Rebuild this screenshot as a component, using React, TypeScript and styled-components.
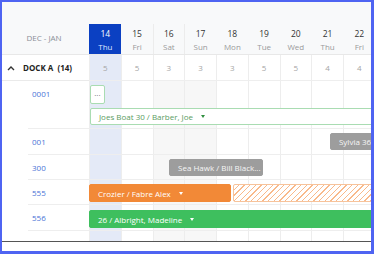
import React from 'react';
import styled, { createGlobalStyle } from 'styled-components';

const COL = 31.75;
const LABEL_W = 87;

type Kind = 'today' | 'weekend' | 'plain';

const days: { n: number; d: string; count: number; kind: Kind }[] = [
  { n: 14, d: 'Thu', count: 5, kind: 'today' },
  { n: 15, d: 'Fri', count: 5, kind: 'plain' },
  { n: 16, d: 'Sat', count: 3, kind: 'weekend' },
  { n: 17, d: 'Sun', count: 3, kind: 'weekend' },
  { n: 18, d: 'Mon', count: 3, kind: 'plain' },
  { n: 19, d: 'Tue', count: 5, kind: 'plain' },
  { n: 20, d: 'Wed', count: 5, kind: 'plain' },
  { n: 21, d: 'Thu', count: 4, kind: 'plain' },
  { n: 22, d: 'Fri', count: 4, kind: 'plain' },
];

type Variant = 'outline' | 'gray' | 'orange' | 'green' | 'hatch' | 'stub';

type Booking = {
  label?: string;
  start: number;
  end?: number; // days; undefined = runs past the view
  top: number;
  height: number;
  variant: Variant;
  caret?: boolean;
};

const rows: { id: string; height: number; bookings: Booking[] }[] = [
  {
    id: '0001',
    height: 48,
    bookings: [
      { label: '...', start: 0.03, end: 0.5, top: 4, height: 19, variant: 'stub' },
      { label: 'Joes Boat 30 / Barber, Joe', start: 0.03, top: 27, height: 17, variant: 'outline', caret: true },
    ],
  },
  {
    id: '001',
    height: 26,
    bookings: [{ label: 'Sylvia 36', start: 7.59, top: 4, height: 17, variant: 'gray' }],
  },
  {
    id: '300',
    height: 25,
    bookings: [{ label: 'Sea Hawk / Bill Black...', start: 2.52, end: 5.48, top: 4, height: 17, variant: 'gray' }],
  },
  {
    id: '555',
    height: 25,
    bookings: [
      { label: 'Crozier / Fabre Alex', start: 0, end: 4.47, top: 4, height: 18, variant: 'orange', caret: true },
      { start: 4.54, top: 4, height: 18, variant: 'hatch' },
    ],
  },
  {
    id: '556',
    height: 26,
    bookings: [{ label: '26 / Albright, Madeline', start: 0, top: 5, height: 18, variant: 'green', caret: true }],
  },
  { id: '558', height: 26, bookings: [] },
];

const GlobalStyle = createGlobalStyle`
  body {
    margin: 0;
    font-family: "Open Sans", "Liberation Sans", sans-serif;
    background: #fff;
  }
`;

const Frame = styled.div`
  width: 374px;
  height: 254px;
  box-sizing: border-box;
  border: solid #4f64f2;
  border-width: 2px 3px 3px 2px;
  background: #fff;
  overflow: hidden;
  display: flex;
  flex-direction: column;
`;

const Header = styled.div`
  display: flex;
  height: 53px;
  box-sizing: border-box;
  padding-top: 22px;
  background: #f8f9fa;
  border-bottom: 1px solid #e8e8e8;
  flex-shrink: 0;
`;

const RangeLabel = styled.div`
  width: ${LABEL_W}px;
  flex-shrink: 0;
  padding: 8px 3px 0 0;
  box-sizing: border-box;
  text-align: center;
  font-size: 8px;
  color: #8a8f98;
`;

const DayHead = styled.div<{ $kind: Kind }>`
  width: ${COL}px;
  flex-shrink: 0;
  display: flex;
  flex-direction: column;
  align-items: center;
  padding-top: 4px;
  box-sizing: border-box;
  background: ${(p) => (p.$kind === 'today' ? '#0b40c2' : 'transparent')};
  border-left: 1px solid ${(p) => (p.$kind === 'weekend' ? '#ececec' : 'transparent')};
`;

const DayNum = styled.span<{ $today: boolean }>`
  font-size: 8.5px;
  line-height: 12px;
  color: ${(p) => (p.$today ? '#fff' : '#333')};
`;

const DayName = styled.span<{ $today: boolean }>`
  font-size: 8px;
  line-height: 13px;
  color: ${(p) => (p.$today ? '#dfe6ff' : '#9a9a9a')};
`;

const Body = styled.div`
  height: 186px;
  overflow: hidden;
  flex-shrink: 0;
`;

const Row = styled.div<{ $h: number }>`
  display: flex;
  height: ${(p) => p.$h}px;
`;

const GroupLabel = styled.div`
  width: ${LABEL_W}px;
  flex-shrink: 0;
  display: flex;
  align-items: center;
  gap: 8px;
  padding-left: 5px;
  box-sizing: border-box;
  border-bottom: 1px solid #eaeaea;
  font-size: 8px;
  font-weight: 700;
  color: #222;
  white-space: pre;
`;

const ResourceLabel = styled.div`
  width: ${LABEL_W - 26}px;
  margin-left: 26px;
  flex-shrink: 0;
  padding-left: 4px;
  box-sizing: border-box;
  border-bottom: 1px solid #eeeeee;
  font-size: 8px;
  line-height: 26px;
  color: #4a73d6;
`;

const Track = styled.div`
  flex: 1;
  position: relative;
  display: grid;
  grid-template-columns: repeat(${days.length}, ${COL}px);
  border-bottom: 1px solid #eeeeee;
  overflow: hidden;
`;

const cellBg: Record<Kind, string> = {
  today: '#e4eaf7',
  weekend: '#f7f7f7',
  plain: '#fff',
};

const Cell = styled.div<{ $kind: Kind }>`
  background: ${(p) => cellBg[p.$kind]};
  border-left: 1px solid #ededed;
`;

const CountCell = styled(Cell)`
  display: flex;
  align-items: center;
  justify-content: center;
  font-size: 8px;
  color: #a5a5a5;
  background: ${(p) => (p.$kind === 'today' ? '#e4eaf7' : '#fff')};
`;

const barStyles: Record<Variant, string> = {
  outline: 'background:#fff;border:1px solid #a9dcb2;color:#5a9c62;',
  stub: 'background:#fff;border:1px solid #a9dcb2;color:#777;justify-content:center;padding:0 0 4px;',
  gray: 'background:#9d9d9d;border:1px solid #9d9d9d;color:#f6f6f6;',
  orange: 'background:#f28937;border:1px solid #f28937;color:#fff;',
  green: 'background:#3ebf5e;border:1px solid #3ebf5e;color:#fff;',
  hatch:
    'border:1px solid #f7c39b;background:repeating-linear-gradient(135deg,#fff 0 3px,#f9b98a 3px 4px);',
};

const Bar = styled.div<{ $variant: Variant }>`
  position: absolute;
  box-sizing: border-box;
  display: flex;
  align-items: center;
  gap: 8px;
  padding-left: 8px;
  border-radius: 2px;
  font-size: 8px;
  white-space: nowrap;
  overflow: hidden;
  ${(p) => barStyles[p.$variant]}
`;

const Caret = styled.span<{ $color: string }>`
  width: 0;
  height: 0;
  border-left: 2.5px solid transparent;
  border-right: 2.5px solid transparent;
  border-top: 3px solid ${(p) => p.$color};
`;

const Footer = styled.div`
  flex: 1;
  border-top: 1px solid #555;
  background: #fff;
`;

const ChevronUp = () => (
  <svg width="8" height="6" viewBox="0 0 8 6">
    <path d="M1 5 L4 2 L7 5" fill="none" stroke="#333" strokeWidth="1.4" />
  </svg>
);

const App: React.FC = () => {
  return (
    <>
      <GlobalStyle />
      <Frame>
        <Header>
          <RangeLabel>DEC - JAN</RangeLabel>
          {days.map((day) => (
            <DayHead key={day.n} $kind={day.kind}>
              <DayNum $today={day.kind === 'today'}>{day.n}</DayNum>
              <DayName $today={day.kind === 'today'}>{day.d}</DayName>
            </DayHead>
          ))}
        </Header>

        <Body>
          <Row $h={26}>
            <GroupLabel>
              <ChevronUp />
              {'DOCK A  (14)'}
            </GroupLabel>
            <Track>
              {days.map((day) => (
                <CountCell key={day.n} $kind={day.kind}>
                  {day.count}
                </CountCell>
              ))}
            </Track>
          </Row>

          {rows.map((row) => (
            <Row key={row.id} $h={row.height}>
              <ResourceLabel>{row.id}</ResourceLabel>
              <Track>
                {days.map((day) => (
                  <Cell key={day.n} $kind={day.kind} />
                ))}
                {row.bookings.map((b, i) => (
                  <Bar
                    key={i}
                    $variant={b.variant}
                    style={{
                      left: b.start * COL,
                      width: b.end !== undefined ? (b.end - b.start) * COL : 400,
                      top: b.top,
                      height: b.height,
                    }}
                  >
                    {b.label}
                    {b.caret && (
                      <Caret $color={b.variant === 'outline' ? '#2f8f3f' : '#fff'} />
                    )}
                  </Bar>
                ))}
              </Track>
            </Row>
          ))}
        </Body>

        <Footer />
      </Frame>
    </>
  );
};

export default App;
